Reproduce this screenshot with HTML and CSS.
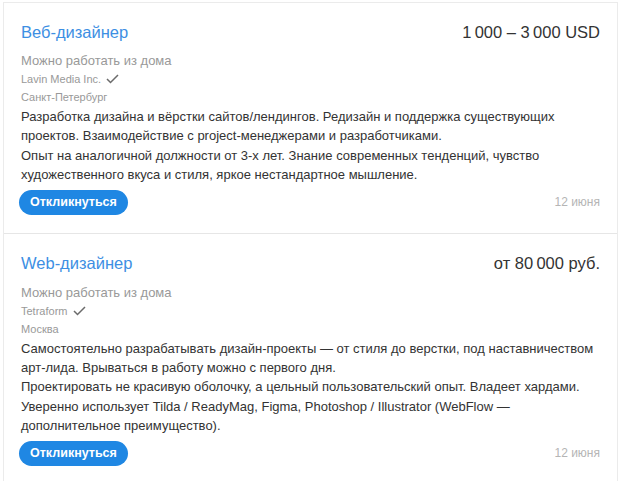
FILE: index.html
```html
<!DOCTYPE html>
<html lang="ru">
<head>
<meta charset="utf-8">
<link rel="stylesheet" href="styles.css">
</head>
<body>
<div class="list">
  <div class="vacancy">
    <div class="head">
      <a class="title">Веб-дизайнер</a>
      <div class="salary">1&#8201;000 – 3&#8201;000 USD</div>
    </div>
    <div class="remote">Можно работать из дома</div>
    <div class="company">Lavin Media Inc. <svg class="check" width="13" height="10" viewBox="0 0 13 10"><polyline points="1,5 4.5,8.5 12,1" fill="none" stroke="#6b6b6b" stroke-width="1.5"/></svg></div>
    <div class="city">Санкт-Петербург</div>
    <div class="desc">
      <p>Разработка дизайна и вёрстки сайтов/лендингов. Редизайн и поддержка существующих проектов. Взаимодействие с project-менеджерами и разработчиками.</p>
      <p>Опыт на аналогичной должности от 3-х лет. Знание современных тенденций, чувство художественного вкуса и стиля, яркое нестандартное мышление.</p>
    </div>
    <div class="foot">
      <button class="btn">Откликнуться</button>
      <span class="date">12 июня</span>
    </div>
  </div>
  <div class="vacancy">
    <div class="head">
      <a class="title">Web-дизайнер</a>
      <div class="salary">от 80&#8201;000 руб.</div>
    </div>
    <div class="remote">Можно работать из дома</div>
    <div class="company">Tetraform <svg class="check" width="13" height="10" viewBox="0 0 13 10"><polyline points="1,5 4.5,8.5 12,1" fill="none" stroke="#6b6b6b" stroke-width="1.5"/></svg></div>
    <div class="city">Москва</div>
    <div class="desc">
      <p>Самостоятельно разрабатывать дизайн-проекты — от стиля до верстки, под наставничеством арт-лида. Врываться в работу можно с первого дня.</p>
      <p>Проектировать не красивую оболочку, а цельный пользовательский опыт. Владеет хардами. Уверенно использует Tilda / ReadyMag, Figma, Photoshop / Illustrator (WebFlow — дополнительное преимущество).</p>
    </div>
    <div class="foot">
      <button class="btn">Откликнуться</button>
      <span class="date">12 июня</span>
    </div>
  </div>
</div>
</body>
</html>
```
FILE: styles.css
```css
* { box-sizing: border-box; }
html, body {
  margin: 0;
  padding: 0;
  background: #fff;
  font-family: "Liberation Sans", Arial, sans-serif;
  color: #333;
}
.list {
  margin: 2px 2px 0 3px;
  border: 1px solid #ebebeb;
  border-bottom: none;
}
.vacancy {
  padding: 17px 17px 18px 17px;
  border-bottom: 1px solid #e6e6e6;
}
.vacancy + .vacancy { padding-top: 18px; }
.head {
  display: flex;
  justify-content: space-between;
  align-items: center;
  height: 24px;
  margin-bottom: 8px;
}
.title {
  font-size: 16.5px;
  color: #3d8fe3;
  text-decoration: none;
}
.salary {
  font-size: 16.5px;
  color: #333;
}
.remote {
  font-size: 13px;
  line-height: 18px;
  color: #999;
}
.company, .city {
  font-size: 11px;
  line-height: 18px;
  color: #999;
}
.check { vertical-align: -1px; margin-left: 2px; }
.desc {
  margin-top: 1px;
  font-size: 13px;
  line-height: 19.4px;
  color: #333;
}
.desc p { margin: 0; }
.foot {
  margin-top: 5px;
  display: flex;
  justify-content: space-between;
  align-items: center;
}
.btn {
  height: 25px;
  padding: 0 11px;
  border: none;
  border-radius: 13px;
  background: #1f87e3;
  color: #fff;
  font-family: "Liberation Sans", Arial, sans-serif;
  font-size: 12.5px;
  font-weight: bold;
  margin-left: -2px;
}
.date {
  font-size: 12px;
  color: #b5b5b5;
}
```
